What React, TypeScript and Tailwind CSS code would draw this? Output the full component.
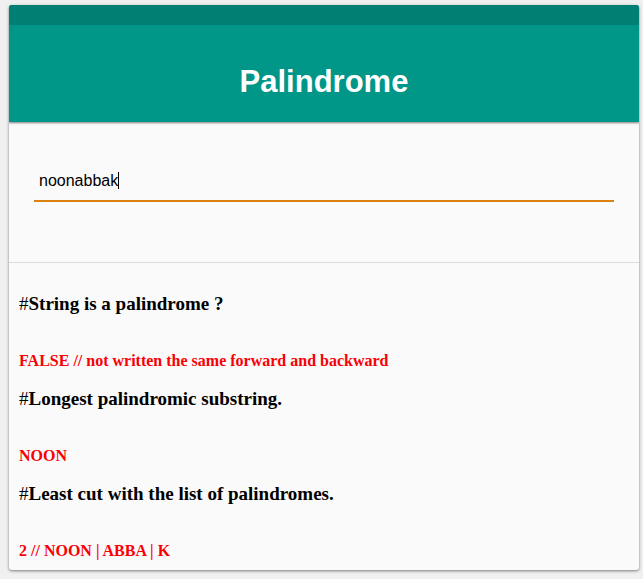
const results = [
  { id: "is", title: "String is a palindrome ?", value: "FALSE // not written the same forward and backward" },
  { id: "longest", title: "Longest palindromic substring.", value: "NOON" },
  { id: "cuts", title: "Least cut with the list of palindromes.", value: "2 // NOON | ABBA | K" },
];

export default function App() {
  return (
    <div className="min-h-screen bg-[#f0f0f0] pt-[5px] pr-1 pb-2 pl-[9px]">
      <main className="overflow-hidden rounded-[3px] bg-[#fafafa] pb-[9px] shadow-[0_1px_3px_rgba(0,0,0,0.5)]">
        <header className="border-t-[20px] border-[#007f72] bg-[#009688] pt-[37px] pb-5 text-center shadow-[0_1px_2px_rgba(0,0,0,0.5)]">
          <h1 className="font-['Liberation_Sans',Arial,sans-serif] text-[31px] leading-10 font-bold text-white">
            Palindrome
          </h1>
        </header>
        <form className="border-b border-[#dddddd] px-[25px] pt-10 pb-[60px]" onSubmit={(e) => e.preventDefault()}>
          <div className="relative">
            <input
              type="text"
              aria-label="Text to check"
              defaultValue="noonabbak"
              className="block h-10 w-full border-b-2 border-[#d9820f] bg-transparent px-[5px] font-['Liberation_Sans',Arial,sans-serif] text-base text-black caret-transparent outline-none"
            />
            <span aria-hidden="true" className="absolute top-[10px] left-[84px] h-[17px] w-px bg-black" />
          </div>
        </form>
        <section className="px-[10px] pt-[29px] font-['Liberation_Serif','Times_New_Roman',serif] font-bold">
          {results.map((r) => (
            <div key={r.id} className="mb-4 last:mb-0">
              <h2 className="mb-[35px] text-[19px] leading-6 text-black">
                <span className="font-normal">#</span>
                {r.title}
              </h2>
              <p className="text-base leading-5 text-[#fa0005]">{r.value}</p>
            </div>
          ))}
        </section>
      </main>
    </div>
  );
}
